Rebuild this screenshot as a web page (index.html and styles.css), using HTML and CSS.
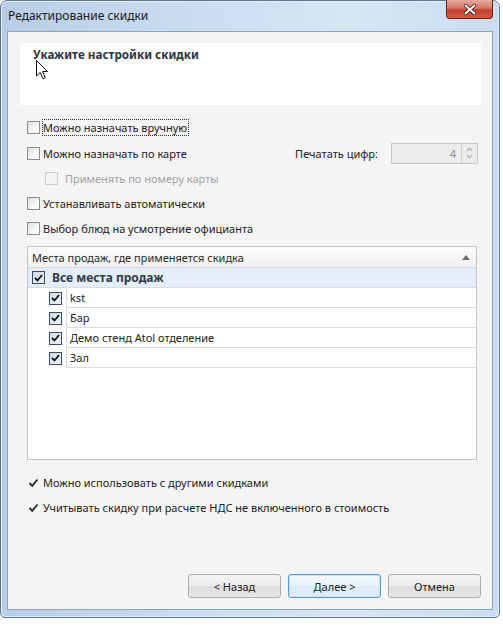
FILE: index.html
```html
<!DOCTYPE html>
<html lang="ru">
<head>
<meta charset="utf-8">
<title>Редактирование скидки</title>
<link rel="stylesheet" href="styles.css">
</head>
<body>
<div class="window">
  <div class="titlebar">
    <span class="title">Редактирование скидки</span>
    <div class="close">
      <svg width="12" height="11" viewBox="0 0 12 11"><path d="M1.5 1.5 L10.5 9.5 M10.5 1.5 L1.5 9.5" stroke="#3a1410" stroke-width="3.6" stroke-linecap="round"/><path d="M1.5 1.5 L10.5 9.5 M10.5 1.5 L1.5 9.5" stroke="#fff" stroke-width="2" stroke-linecap="round"/></svg>
    </div>
  </div>
  <div class="client">
    <div class="header-panel">
      <div class="header-title">Укажите настройки скидки</div>
      <svg class="cursor" width="13" height="20" viewBox="0 0 13 20"><path d="M0.5 0.5 L0.5 16 L4.2 12.4 L7 18.8 L9.3 17.8 L6.6 11.5 L11.5 11.5 Z" fill="#fff" stroke="#111" stroke-width="1"/></svg>
    </div>

    <div class="options">
      <div class="row h26"><span class="cb"></span><span class="lbl focus">Можно назначать вручную</span></div>
      <div class="row h26"><span class="cb"></span><span class="lbl">Можно назначать по карте</span>
        <div class="digits">
          <span class="digits-label">Печатать цифр:</span>
          <div class="spin">
            <span class="spin-val">4</span>
            <span class="spin-btns">
              <svg width="7" height="14" viewBox="0 0 7 14"><path d="M1 5 L3.5 2 L6 5 M1 9 L3.5 12 L6 9" fill="none" stroke="#b4b4b4" stroke-width="1.2"/></svg>
            </span>
          </div>
        </div>
      </div>
      <div class="row sub disabled"><span class="cb"></span><span class="lbl">Применять по номеру карты</span></div>
      <div class="row"><span class="cb"></span><span class="lbl">Устанавливать автоматически</span></div>
      <div class="row"><span class="cb"></span><span class="lbl">Выбор блюд на усмотрение официанта</span></div>
    </div>

    <div class="tree">
      <div class="tree-head">
        <span>Места продаж, где применяется скидка</span>
        <span class="sort"></span>
      </div>
      <div class="tree-row root">
        <span class="cb dark"><svg width="9" height="8" viewBox="0 0 9 8"><path d="M1 4 L3.5 6.5 L8 1" fill="none" stroke="#111" stroke-width="1.8"/></svg></span>
        <span class="root-text">Все места продаж</span>
      </div>
      <div class="tree-row child">
        <span class="cb dark"><svg width="9" height="8" viewBox="0 0 9 8"><path d="M1 4 L3.5 6.5 L8 1" fill="none" stroke="#111" stroke-width="1.8"/></svg></span>
        <span class="cell">kst</span>
      </div>
      <div class="tree-row child">
        <span class="cb dark"><svg width="9" height="8" viewBox="0 0 9 8"><path d="M1 4 L3.5 6.5 L8 1" fill="none" stroke="#111" stroke-width="1.8"/></svg></span>
        <span class="cell">Бар</span>
      </div>
      <div class="tree-row child">
        <span class="cb dark"><svg width="9" height="8" viewBox="0 0 9 8"><path d="M1 4 L3.5 6.5 L8 1" fill="none" stroke="#111" stroke-width="1.8"/></svg></span>
        <span class="cell">Демо стенд Atol отделение</span>
      </div>
      <div class="tree-row child">
        <span class="cb dark"><svg width="9" height="8" viewBox="0 0 9 8"><path d="M1 4 L3.5 6.5 L8 1" fill="none" stroke="#111" stroke-width="1.8"/></svg></span>
        <span class="cell">Зал</span>
      </div>
    </div>

    <div class="options bottom">
      <div class="row"><span class="cb flat"><svg width="11" height="10" viewBox="0 0 11 10"><path d="M1.5 5 L4.2 7.8 L9.5 1.5" fill="none" stroke="#2a2a2a" stroke-width="1.9"/></svg></span><span class="lbl">Можно использовать с другими скидками</span></div>
      <div class="row"><span class="cb flat"><svg width="11" height="10" viewBox="0 0 11 10"><path d="M1.5 5 L4.2 7.8 L9.5 1.5" fill="none" stroke="#2a2a2a" stroke-width="1.9"/></svg></span><span class="lbl">Учитывать скидку при расчете НДС не включенного в стоимость</span></div>
    </div>

    <div class="buttons">
      <div class="btn">&lt; Назад</div>
      <div class="btn default">Далее &gt;</div>
      <div class="btn">Отмена</div>
    </div>
  </div>
</div>
</body>
</html>
```

FILE: styles.css
```css
html, body {
  margin: 0;
  padding: 0;
  background: #ffffff;
}
body {
  font-family: "Noto Sans", "Open Sans", sans-serif;
  font-size: 11px;
  color: #222222;
}
.window {
  box-sizing: border-box;
  width: 500px;
  height: 618px;
  border: 1px solid #5d7792;
  border-radius: 7px 7px 5px 5px;
  background: linear-gradient(to right, #b8cde6 0%, #c9dbef 35%, #d7e6f5 70%, #cbdcef 100%);
  display: flex;
  flex-direction: column;
  box-shadow: inset 0 0 0 1px #e6eff9;
}
.titlebar {
  height: 30px;
  display: flex;
  align-items: flex-start;
  padding-left: 7px;
}
.title {
  margin-top: 7px;
  font-size: 12px;
  line-height: 16px;
  color: #1a1a1a;
}
.close {
  margin-left: auto;
  margin-right: 6px;
  margin-top: -1px;
  width: 45px;
  height: 18px;
  border: 1px solid #6a2620;
  border-top: none;
  border-radius: 0 0 4px 4px;
  background: linear-gradient(#e9a99f 0%, #d7776b 45%, #c2402f 55%, #cf5a47 100%);
  display: flex;
  align-items: center;
  justify-content: center;
}
.client {
  flex: 1;
  margin: 0 6px 7px 6px;
  border: 1px solid #8ba4c0;
  background: #f4f4f4;
  display: flex;
  flex-direction: column;
}
.header-panel {
  position: relative;
  margin: 11px 11px 0 12px;
  height: 62px;
  box-sizing: border-box;
  background: #ffffff;
  padding: 4px 13px;
}
.header-title {
  font-weight: bold;
  font-size: 11.7px;
  line-height: 14px;
  color: #2b3340;
}
.cursor {
  position: absolute;
  left: 16px;
  top: 17px;
}
.options {
  margin-top: 9px;
  padding: 0 14px 0 19px;
  display: flex;
  flex-direction: column;
}
.row {
  height: 25px;
  display: flex;
  align-items: center;
}
.row.h26 {
  height: 26px;
}
.cb {
  box-sizing: border-box;
  width: 13px;
  height: 13px;
  flex: none;
  border: 1px solid #8e8f8f;
  background: linear-gradient(135deg, #dedede 0%, #f7f7f7 60%, #ffffff 100%);
  display: flex;
  align-items: center;
  justify-content: center;
}
.lbl {
  margin-left: 3px;
  line-height: 15px;
}
.lbl.focus {
  outline: 1px dotted #333;
  outline-offset: 0;
  padding: 0 1px 0 0;
}
.row.sub {
  padding-left: 18px;
}
.row.sub .lbl {
  margin-left: 7px;
}
.disabled .cb {
  border-color: #cdcdcd;
  background: #f4f4f4;
}
.disabled .lbl {
  color: #a3a3a3;
}
.digits {
  margin-left: auto;
  display: flex;
  align-items: center;
}
.digits-label {
  margin-right: 13px;
}
.spin {
  box-sizing: border-box;
  width: 87px;
  height: 21px;
  border: 1px solid #c6c6c6;
  background: #ececec;
  display: flex;
  align-items: center;
}
.spin-val {
  flex: 1;
  text-align: right;
  padding-right: 5px;
  color: #8c8c8c;
}
.spin-btns {
  box-sizing: border-box;
  width: 16px;
  height: 19px;
  border-left: 1px solid #d0d0d0;
  display: flex;
  align-items: center;
  justify-content: center;
}
.tree {
  margin: 5px 15px 0 19px;
  height: 214px;
  box-sizing: border-box;
  border: 1px solid #c3c3c3;
  background: #ffffff;
  display: flex;
  flex-direction: column;
}
.tree-head {
  height: 20px;
  flex: none;
  border-bottom: 1px solid #d8d8d8;
  background: linear-gradient(#fafafa, #f1f1f1);
  display: flex;
  align-items: center;
  padding: 0 6px 0 4px;
  color: #2a2a2a;
}
.sort {
  margin-left: auto;
  width: 0;
  height: 0;
  border-left: 4px solid transparent;
  border-right: 4px solid transparent;
  border-bottom: 5px solid #6e6e6e;
}
.tree-row {
  display: flex;
  align-items: center;
  flex: none;
}
.tree-row.root {
  height: 19px;
  background: #e3eefa;
  border-bottom: 1px solid #d6dde6;
  padding-left: 4px;
}
.cb.dark {
  border-color: #3d4d60;
  background: linear-gradient(135deg, #cfdbe8 0%, #eef3f8 100%);
}
.root-text {
  margin-left: 7px;
  font-weight: bold;
  font-size: 12px;
  color: #333a45;
}
.tree-row.child {
  height: 20px;
  padding-left: 21px;
}
.cell {
  margin-left: 4px;
  align-self: stretch;
  flex: 1;
  display: flex;
  align-items: center;
  padding-left: 3px;
  border-left: 1px solid #dcdcdc;
  border-bottom: 1px solid #dcdcdc;
}
.options.bottom {
  margin-top: 10px;
}
.cb.flat {
  border-color: transparent;
  background: transparent;
}
.buttons {
  margin-top: auto;
  padding: 0 11px 11px 0;
  display: flex;
  justify-content: flex-end;
  gap: 7px;
}
.btn {
  box-sizing: border-box;
  width: 93px;
  height: 24px;
  border: 1px solid #adadad;
  border-radius: 3px;
  background: linear-gradient(#f3f3f3 0%, #ebebeb 50%, #dedede 51%, #e6e6e6 100%);
  display: flex;
  align-items: center;
  justify-content: center;
  color: #222222;
}
.btn.default {
  border-color: #5c9bd1;
  background: linear-gradient(#f4f9fd 0%, #e8f2fb 50%, #dbeaf7 51%, #e3eef8 100%);
  box-shadow: inset 0 0 0 1px #c8e0f5;
}
```
